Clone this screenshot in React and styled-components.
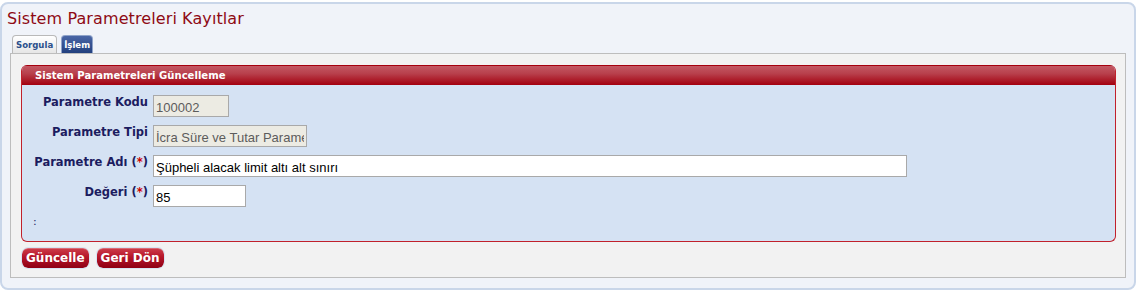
import React from "react";
import styled, { createGlobalStyle } from "styled-components";

const GlobalStyle = createGlobalStyle`
  html, body {
    margin: 0;
    padding: 0;
    background: #ffffff;
  }
  body {
    font-family: "DejaVu Sans", Verdana, sans-serif;
  }
`;

const Frame = styled.div`
  box-sizing: border-box;
  margin: 2px 1px 0 0;
  height: 288px;
  border: 2px solid #c9d6e9;
  border-radius: 8px;
  background: #f0f3f9;
`;

const Title = styled.h1`
  margin: 0;
  padding: 5px 0 0 5px;
  height: 31px;
  box-sizing: border-box;
  font-family: "DejaVu Sans", Verdana, sans-serif;
  font-weight: normal;
  font-size: 16px;
  color: #8e0a14;
  letter-spacing: 0.1px;
`;

const TabBar = styled.div`
  display: flex;
  align-items: flex-end;
  gap: 4px;
  margin: 0 8px;
  padding-left: 2px;
  height: 18px;
`;

const Tab = styled.div`
  box-sizing: border-box;
  height: 18px;
  padding: 0 ${(p) => (p.$active ? "2px" : "3px")};
  display: flex;
  align-items: center;
  border: 1px solid ${(p) => (p.$active ? "#8fa3c9" : "#b9b9b9")};
  border-bottom: none;
  border-radius: 4px 4px 0 0;
  font-family: "DejaVu Sans Condensed", "DejaVu Sans", sans-serif;
  font-weight: bold;
  font-size: 9.5px;
  color: ${(p) => (p.$active ? "#ffffff" : "#2b4f8c")};
  background: ${(p) =>
    p.$active
      ? "linear-gradient(#4a66a6, #22407e)"
      : "linear-gradient(#ffffff, #e6e6e6)"};
`;

const Panel = styled.div`
  box-sizing: border-box;
  height: 225px;
  margin: 0 8px;
  border: 1px solid #bdbdbd;
  background: #f2f2f2;
  padding: 11px 9px 0 10px;
`;

const Fieldset = styled.div`
  box-sizing: border-box;
  height: 177px;
  border: 1px solid #c1212c;
  border-top: none;
  border-radius: 6px;
  background: #d5e2f3;
  overflow: hidden;
`;

const Legend = styled.div`
  height: 20px;
  box-sizing: border-box;
  padding-left: 13px;
  display: flex;
  align-items: center;
  border-top: 1px solid #a5000e;
  background: linear-gradient(#c35863 0%, #b8404c 40%, #a3000f 100%);
  font-family: "DejaVu Sans Condensed", "DejaVu Sans", sans-serif;
  font-weight: bold;
  font-size: 11.2px;
  color: #ffffff;
`;

const Form = styled.div`
  padding-top: 6px;
  display: flex;
  flex-direction: column;
`;

const Row = styled.div`
  display: grid;
  grid-template-columns: 126px 1fr;
  column-gap: 5px;
  height: 30px;
  align-items: start;
  padding-top: 4px;
  box-sizing: border-box;
`;

const Label = styled.label`
  text-align: right;
  font-family: "DejaVu Sans", Verdana, sans-serif;
  font-weight: bold;
  font-size: 11.5px;
  color: #1c1c60;
  white-space: nowrap;
`;

const Req = styled.span`
  color: #cc0000;
`;

const Input = styled.input`
  box-sizing: border-box;
  width: ${(p) => p.$w}px;
  height: 22px;
  margin: 0;
  padding: 2px 2px 0 2px;
  border: 1px solid #a9a9a9;
  background: ${(p) => (p.readOnly ? "#ecebe3" : "#ffffff")};
  color: ${(p) => (p.readOnly ? "#5c5c5c" : "#000000")};
  font-family: "Liberation Sans", Arial, sans-serif;
  font-size: 13px;
  outline: none;
`;

const Note = styled.div`
  padding: 4px 0 0 11px;
  font-size: 11px;
  color: #1c1c60;
`;

const Buttons = styled.div`
  display: flex;
  gap: 8px;
  padding: 6px 0 0 1px;
`;

const Button = styled.button`
  box-sizing: border-box;
  height: 20px;
  padding: 0 4px;
  border: none;
  border-radius: 6px;
  outline: 1px solid #d7e4f3;
  background: linear-gradient(#cf3d4b 0%, #b5162a 45%, #8f0014 100%);
  box-shadow: inset 0 1px 0 rgba(255, 255, 255, 0.25);
  font-family: "DejaVu Sans", Verdana, sans-serif;
  font-weight: bold;
  font-size: 12px;
  color: #ffffff;
  cursor: pointer;
`;

const fields = [
  { label: "Parametre Kodu", value: "100002", width: 76, readOnly: true },
  { label: "Parametre Tipi", value: "İcra Süre ve Tutar Parametreleri", width: 154, readOnly: true },
  { label: "Parametre Adı", value: "Şüpheli alacak limit altı alt sınırı", width: 754, required: true },
  { label: "Değeri", value: "85", width: 93, required: true },
];

export default function App() {
  return (
    <>
      <GlobalStyle />
      <Frame>
        <Title>Sistem Parametreleri Kayıtlar</Title>
        <TabBar>
          <Tab>Sorgula</Tab>
          <Tab $active>İşlem</Tab>
        </TabBar>
        <Panel>
          <Fieldset>
            <Legend>Sistem Parametreleri Güncelleme</Legend>
            <Form>
              {fields.map((f) => (
                <Row key={f.label}>
                  <Label>
                    {f.label}
                    {f.required && (
                      <>
                        {" ("}
                        <Req>*</Req>
                        {")"}
                      </>
                    )}
                  </Label>
                  <Input
                    $w={f.width}
                    defaultValue={f.value}
                    readOnly={f.readOnly}
                  />
                </Row>
              ))}
              <Note>:</Note>
            </Form>
          </Fieldset>
          <Buttons>
            <Button>Güncelle</Button>
            <Button>Geri Dön</Button>
          </Buttons>
        </Panel>
      </Frame>
    </>
  );
}
